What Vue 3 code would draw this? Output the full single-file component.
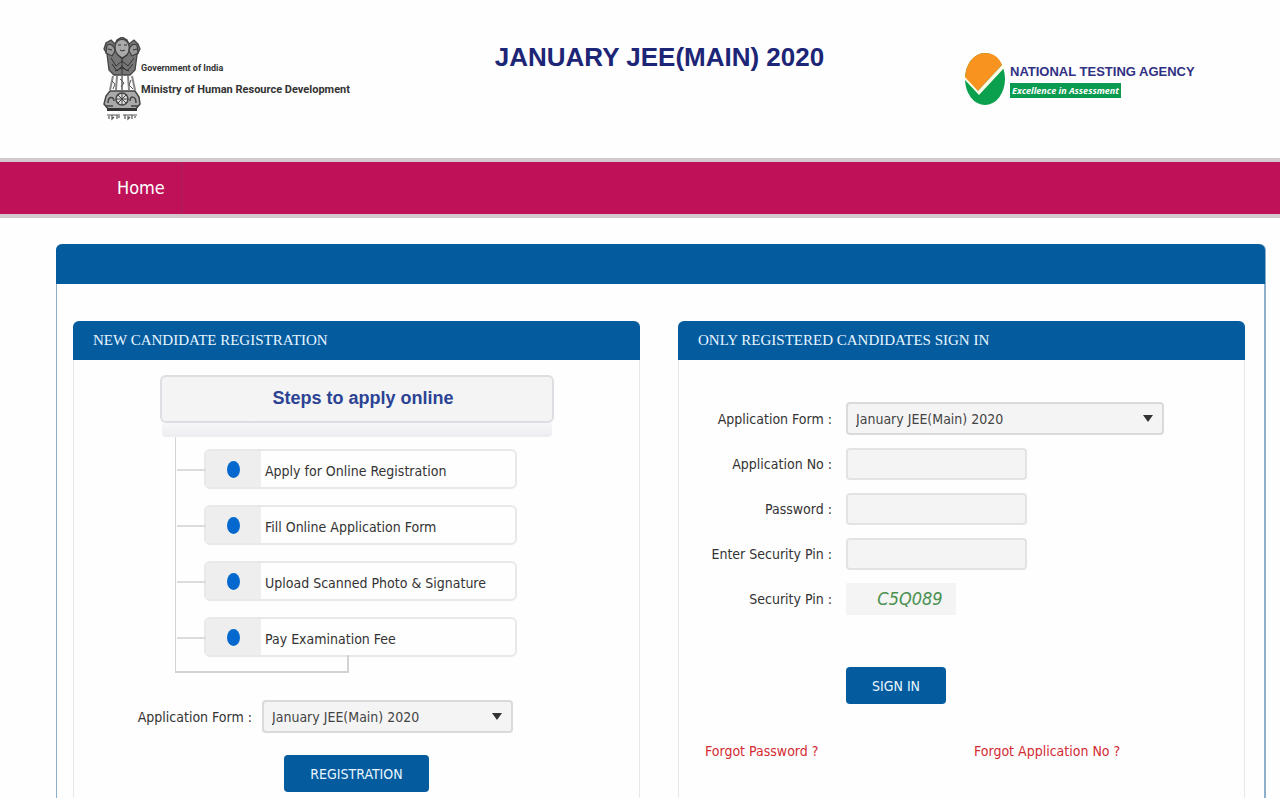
<script setup>
import { ref } from 'vue'

const steps = [
  'Apply for Online Registration',
  'Fill Online Application Form',
  'Upload Scanned Photo & Signature',
  'Pay Examination Fee',
]
const exams = ['January JEE(Main) 2020']
const newExam = ref(exams[0])
const signInExam = ref(exams[0])
const applicationNo = ref('')
const password = ref('')
const pin = ref('')
</script>

<template>
  <div class="page">
    <header class="masthead">
      <div class="ministry">
        <svg class="emblem" viewBox="0 0 38 84" aria-hidden="true">
          <g fill="#777" stroke="#444" stroke-width="1.3">
            <path d="M4 17 1 12 3 6 8 3 12 7 14 3 19 0 24 3 26 7 31 3 35 7 37 12 34 18 32 33 27 38 11 38 6 33Z" />
            <path d="M13 6c-2 4-1 9 2 12l4 3 5-3c3-4 3-8 1-12-3-5-9-5-12 0Z" fill="#aaa" />
            <path d="M4 8c4-2 8 1 8 6l-3 5-6-3ZM34 8c-4-2-8 1-8 6l3 5 6-3Z" fill="#999" />
          </g>
          <g fill="none" stroke="#333">
            <path d="M15 8h3M21 8h3M17 13l2 1 3-1M14 17l5 5 6-5M5 12l4 1M30 13l4-1M8 21l5 8 6-5 6 5 6-8M9 27l5 7 5-5 5 5 6-7M12 34l7-3 7 3M19 22v15" />
            <path d="M10 39l-3 14M14 39l-1 14M19 39v14M25 39l1 14M29 39l3 14" stroke="#888" stroke-width="2" />
            <path d="M9 44l3 3-2 5M28 43l-2 5 4 4M17 42l4 4-3 4" stroke="#555" />
          </g>
          <g stroke="#444" stroke-width="1.5">
            <path d="M7 54h25l4 6 1 7-5 6H6l-5-6 2-8Z" fill="#aaa" />
            <circle cx="19" cy="62" r="6" fill="#ddd" />
            <path d="M13 62h12M19 56v12M15 58l8 8M23 58l-8 8" stroke-width="1" />
            <path d="M5 66c0-7 6-7 6-2M27 64c0-6 6-5 6 2M3 69h7M28 69h7" fill="none" />
          </g>
          <path d="M4 71h30v3H4z" fill="#333" />
          <path d="M4 78h13M20 78h14M6 79v3M9 78v4l2-2M14 78v4M16 79v2M22 78v4M25 79v3l2-2M29 78v4M32 79v2" fill="none" stroke="#555" stroke-width="1.2" />
        </svg>
        <div class="ministry-text">
          <span class="gov">Government of India</span>
          <span class="dept">Ministry of Human Resource Development</span>
        </div>
      </div>
      <h1>JANUARY JEE(MAIN) 2020</h1>
      <div class="agency">
        <svg class="agency-logo" viewBox="0 0 42 54" aria-hidden="true">
          <ellipse cx="21" cy="27" rx="20" ry="26" fill="#0aa04e" />
          <path d="M1 27C1 12 10 1 21 1c8 0 14 4 17 12L14 39Z" fill="#f7931e" />
          <path d="M0 24 14 39 39 12 41 15 15 43 1 28Z" fill="#fffde8" />
        </svg>
        <div class="agency-text">
          <span class="agency-name">NATIONAL TESTING AGENCY</span>
          <span class="agency-tag">Excellence in Assessment</span>
        </div>
      </div>
    </header>

    <nav class="navbar"><a href="#">Home</a></nav>

    <main class="board">
      <div class="board-head"></div>
      <div class="columns">
        <section class="panel">
          <h2>NEW CANDIDATE REGISTRATION</h2>
          <div class="steps">
            <h3>Steps to apply online</h3>
            <div class="shelf"></div>
            <ol>
              <li v-for="step in steps" :key="step">
                <span class="bullet"><i></i></span>
                <span class="step-name">{{ step }}</span>
              </li>
            </ol>
          </div>
          <form class="register" @submit.prevent>
            <div class="register-row">
              <label for="new-exam">Application Form :</label>
              <div class="select">
                <select id="new-exam" v-model="newExam">
                  <option v-for="exam in exams" :key="exam">{{ exam }}</option>
                </select>
                <svg viewBox="0 0 10 7" aria-hidden="true"><path d="M0 0h10L5 7Z" fill="#333" /></svg>
              </div>
            </div>
            <button>REGISTRATION</button>
          </form>
        </section>

        <section class="panel">
          <h2>ONLY REGISTERED CANDIDATES SIGN IN</h2>
          <form class="signin" @submit.prevent>
            <label for="exam">Application Form :</label>
            <div class="select">
              <select id="exam" v-model="signInExam">
                <option v-for="exam in exams" :key="exam">{{ exam }}</option>
              </select>
              <svg viewBox="0 0 10 7" aria-hidden="true"><path d="M0 0h10L5 7Z" fill="#333" /></svg>
            </div>
            <label for="app-no">Application No :</label>
            <input id="app-no" v-model="applicationNo" type="text" />
            <label for="password">Password :</label>
            <input id="password" v-model="password" type="password" />
            <label for="pin">Enter Security Pin :</label>
            <input id="pin" v-model="pin" type="text" />
            <span class="pin-label">Security Pin :</span>
            <span class="captcha">C5Q089</span>
            <button>SIGN IN</button>
          </form>
          <div class="links">
            <a href="#">Forgot Password ?</a>
            <a href="#">Forgot Application No ?</a>
          </div>
        </section>
      </div>
    </main>
  </div>
</template>

<style>
body {
  background: #fefefe;
}
</style>

<style scoped>
* {
  box-sizing: border-box;
}
.page {
  min-height: 100vh;
  display: flex;
  flex-direction: column;
  font: 14px/20px "DejaVu Sans Condensed", "DejaVu Sans", sans-serif;
  color: #333;
}
h1,
h2,
h3,
ol {
  margin: 0;
  padding: 0;
}
.masthead {
  display: grid;
  grid-template-columns: 1fr auto 1fr;
  align-items: start;
  height: 158px;
  padding: 37px 80px 0 103px;
}
.ministry {
  display: flex;
}
.emblem {
  width: 38px;
  height: 84px;
}
.ministry-text {
  display: flex;
  flex-direction: column;
  padding-top: 21px;
  color: #333;
  font-family: Roboto, sans-serif;
  font-weight: 700;
  white-space: nowrap;
}
.gov {
  font-size: 9px;
  line-height: 20px;
}
.dept {
  font-size: 11px;
  line-height: 24px;
}
h1 {
  padding-left: 16px;
  color: #1d2576;
  font: 700 26px/40px "Liberation Sans", sans-serif;
  white-space: nowrap;
}
.agency {
  display: flex;
  justify-self: end;
  gap: 4px;
  padding-top: 15px;
}
.agency-logo {
  width: 42px;
  height: 54px;
}
.agency-text {
  display: flex;
  flex-direction: column;
  align-items: start;
  width: 190px;
  padding-top: 10px;
  white-space: nowrap;
}
.agency-name {
  color: #303083;
  font: 700 13px/20px "Liberation Sans", sans-serif;
}
.agency-tag {
  margin-top: 1px;
  padding: 0 2px;
  background: #0a9a50;
  color: #fff;
  font: italic 700 9px/15px "Open Sans", sans-serif;
}
.navbar {
  display: flex;
  height: 60px;
  padding-left: 103px;
  border: solid #d2c9cf;
  border-width: 4px 0;
  background: #be1158;
}
.navbar a {
  padding: 0 16px 0 14px;
  border-right: 2px solid #b31a5b;
  color: #fff;
  font-size: 18px;
  line-height: 52px;
  text-decoration: none;
}
.board {
  flex: 1;
  display: flex;
  flex-direction: column;
  margin: 26px 14px 0 56px;
  border: solid #8fb0cb;
  border-width: 0 2px 0 1px;
  border-radius: 6px 6px 0 0;
}
.board-head {
  height: 40px;
  margin: 0 -1px;
  border-radius: 6px 6px 0 0;
  background: #045c9f;
}
.columns {
  flex: 1;
  display: grid;
  grid-template-columns: 1fr 1fr;
  gap: 38px;
  padding: 37px 19px 0 16px;
}
.panel {
  border: solid #e8e8ea;
  border-width: 0 1px;
  border-radius: 6px 6px 0 0;
}
.panel h2 {
  margin: 0 -1px;
  padding-left: 20px;
  border-radius: 6px 6px 0 0;
  background: #045c9f;
  color: #e9f6ff;
  font: 400 15px/39px "Liberation Serif", serif;
}
.steps {
  width: 394px;
  margin: 15px 0 0 86px;
}
.steps h3 {
  height: 48px;
  padding-left: 12px;
  border: 2px solid #dcdee2;
  border-radius: 6px;
  background: #f4f4f5;
  color: #2c4394;
  font: 700 18px/42px "Liberation Sans", sans-serif;
  text-align: center;
}
.shelf {
  height: 14px;
  margin: 0 2px;
  border-radius: 0 0 4px 4px;
  background: linear-gradient(#f7f7f9, #ededf1);
}
.steps ol {
  position: relative;
  display: grid;
  gap: 16px;
  margin: 0 37px 0 15px;
  padding: 12px 0 16px 28px;
  border-left: 1px solid #d3d3d5;
  list-style: none;
}
.steps ol::after {
  content: "";
  position: absolute;
  left: 0;
  bottom: 0;
  width: 50%;
  height: 16px;
  border: solid #d3d3d5;
  border-width: 0 2px 2px 0;
}
.steps li {
  position: relative;
  display: flex;
  height: 40px;
  border: 2px solid #e8e8ea;
  border-radius: 6px;
}
.steps li::before {
  content: "";
  position: absolute;
  right: 100%;
  top: 50%;
  width: 29px;
  border-top: 2px solid #dcdcde;
}
.bullet {
  display: grid;
  place-items: center;
  width: 55px;
  background: #eee;
}
.bullet i {
  width: 13px;
  height: 17px;
  border-radius: 50%;
  background: #0468cf;
}
.step-name {
  padding: 2px 0 0 4px;
  line-height: 36px;
}
.register {
  display: flex;
  flex-direction: column;
  align-items: center;
  gap: 22px;
  padding: 27px 0 7px;
}
.register-row {
  display: flex;
  align-items: center;
  align-self: start;
  justify-content: end;
  gap: 10px;
  width: 439px;
}
.register-row .select {
  width: 251px;
}
.select {
  position: relative;
}
.select svg {
  position: absolute;
  right: 11px;
  top: 13px;
  width: 10px;
  height: 7px;
  pointer-events: none;
}
select,
input {
  display: block;
  height: 32px;
  border: 2px solid #e3e3e3;
  border-radius: 4px;
  background: #f4f4f4;
  color: #444;
  font: inherit;
}
select {
  appearance: none;
  width: 100%;
  height: 33px;
  padding: 0 8px;
  border-color: #dadada;
}
input {
  width: 181px;
}
button {
  height: 37px;
  padding: 0 26px;
  border: 0;
  border-radius: 4px;
  background: #045c9f;
  color: #e9f6ff;
  font: inherit;
}
.signin {
  display: grid;
  grid-template-columns: 153px 318px;
  column-gap: 14px;
  row-gap: 13px;
  align-items: center;
  justify-items: start;
  padding-top: 42px;
}
.signin label,
.pin-label {
  justify-self: end;
}
.signin .select {
  width: 100%;
}
.captcha {
  width: 110px;
  padding-left: 18px;
  background: #f3f4f3;
  color: #4a9150;
  font-size: 18px;
  font-style: italic;
  line-height: 32px;
  text-align: center;
}
.signin button {
  grid-column: 2;
  margin-top: 39px;
}
.links {
  display: grid;
  grid-template-columns: 269px auto;
  justify-content: start;
  padding: 37px 0 0 26px;
}
.links a {
  color: #d32b33;
  text-decoration: none;
}
</style>
